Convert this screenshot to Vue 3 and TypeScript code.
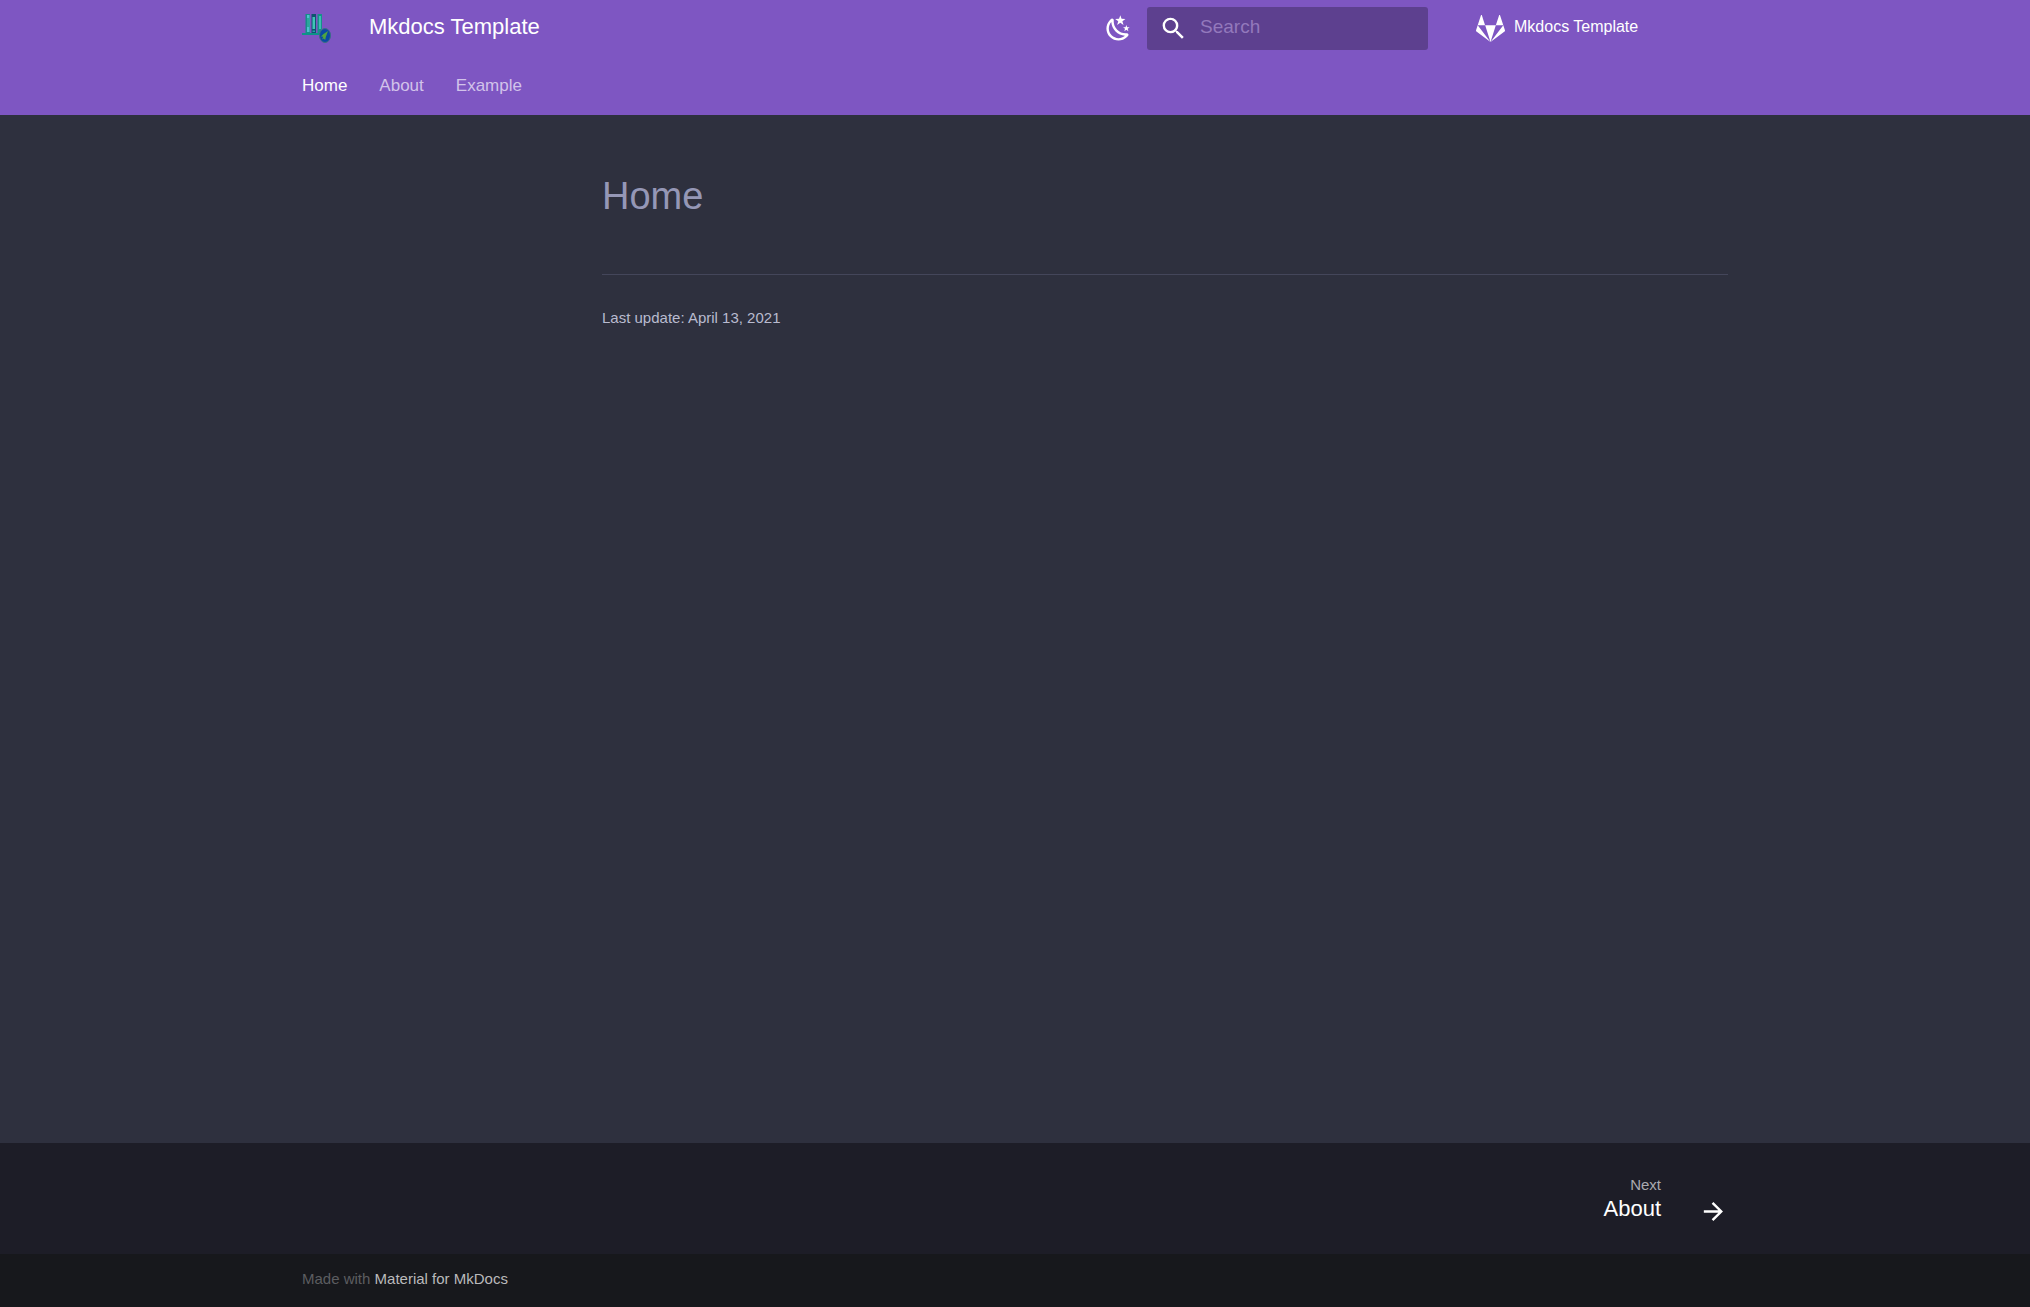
<script setup lang="ts">
import { ref } from 'vue'

interface Tab {
  label: string
  href: string
}

const tabs: Tab[] = [
  { label: 'Home', href: '#home' },
  { label: 'About', href: '#about' },
  { label: 'Example', href: '#example' },
]

const active = ref('Home')
const query = ref('')
</script>

<template>
  <div class="page">
    <header class="header">
      <div class="grid bar">
        <a class="logo" href="#home" aria-label="Mkdocs Template">
          <svg viewBox="0 0 29 29">
            <path d="M0 19h20v2H0z" fill="#0c9488" />
            <path d="M3.500 0H8v19H3.500z" fill="#158f88" />
            <path d="M5 1h2.500v17H5z" fill="#4fc0cf" />
            <path d="M5 4h2.500v9H5z" fill="#2aa79b" />
            <path d="M9.500 0H14v19H9.500z" fill="#0e5470" />
            <path d="M10.500 3h2.500v12h-2.500z" fill="#3fc4b6" />
            <path d="M10.500 16.500h2.500V18h-2.500z" fill="#2a9db0" />
            <path d="M15.500 0H20v15l-3 4h-1.500z" fill="#16918a" />
            <path d="M17 2h2v13h-2z" fill="#3dbdb2" />
            <ellipse cx="23" cy="21.500" rx="5.500" ry="7" fill="#0b49a5" stroke="#3b6f80" />
            <path d="M26 17l-4.500 3-2.500 2.500 2.300.3L20 25.500l1.700-1 1.500 1.500.6-3z" fill="#4fa53f" />
          </svg>
        </a>
        <span class="title">Mkdocs Template</span>
        <button class="palette" type="button" aria-label="Switch color scheme">
          <svg viewBox="0 0 24 24">
            <path d="M17.75 4.090l-2.530 1.940.910 3.060-2.630-1.810-2.630 1.810.910-3.060-2.530-1.940L12.440 4l1.060-3 1.060 3 3.190.090m3.500 6.910l-1.640 1.250.590 1.980-1.700-1.170-1.700 1.170.590-1.980L15.750 11l2.060-.050L18.500 9l.690 1.950 2.060.050m-2.280 4.950c.830-.080 1.720 1.100 1.190 1.850-.320.450-.660.870-1.080 1.270C15.170 23 8.840 23 4.940 19.070c-3.910-3.900-3.910-10.240 0-14.140.400-.400.820-.760 1.270-1.080.750-.530 1.930.360 1.850 1.190-.270 2.860.690 5.830 2.890 8.020a9.960 9.960 0 0 0 8.020 2.890m-1.640 2.020a12.080 12.080 0 0 1-7.800-3.470c-2.170-2.190-3.330-5-3.490-7.820-2.810 3.140-2.700 7.960.310 10.980 3.020 3.010 7.840 3.120 10.980.310z" />
          </svg>
        </button>
        <form class="search" role="search" @submit.prevent>
          <label for="search" aria-label="Search">
            <svg viewBox="0 0 24 24">
              <path d="M9.500 3A6.500 6.500 0 0 1 16 9.500c0 1.610-.590 3.090-1.560 4.230l.270.270h.790l5 5-1.500 1.500-5-5v-.790l-.270-.270A6.516 6.516 0 0 1 9.500 16 6.500 6.500 0 0 1 3 9.500 6.500 6.500 0 0 1 9.500 3m0 2C7 5 5 7 5 9.500S7 14 9.500 14 14 12 14 9.500 12 5 9.500 5z" />
            </svg>
          </label>
          <input id="search" v-model="query" type="text" placeholder="Search" autocomplete="off" />
        </form>
        <a class="source" href="#repository">
          <svg viewBox="0 0 512 512">
            <path d="M105.200 24.900c-3.100-8.900-15.700-8.900-18.900 0L29.800 199.700h132c-.100 0-56.600-174.800-56.600-174.800zM.900 287.700c-2.600 8 .300 16.900 7.100 22l247.900 184-226.200-294zm160.800-88l94.300 294 94.300-294zm349.400 88l-28.800-88-226.300 294 247.900-184c6.900-5.100 9.700-14 7.200-22zM425.700 24.900c-3.100-8.900-15.700-8.900-18.900 0l-56.600 174.800h132z" />
          </svg>
          <span>Mkdocs Template</span>
        </a>
      </div>
      <nav class="grid tabs" aria-label="Tabs">
        <a
          v-for="tab in tabs"
          :key="tab.label"
          :href="tab.href"
          :class="{ active: tab.label === active }"
          @click="active = tab.label"
        >{{ tab.label }}</a>
      </nav>
    </header>

    <main class="grid main">
      <article class="content">
        <h1>Home</h1>
        <hr />
        <p>Last update: April 13, 2021</p>
      </article>
    </main>

    <footer>
      <div class="footer-nav">
        <div class="grid">
          <a class="next" href="#about">
            <span class="next-text">
              <span class="direction">Next</span>
              <span class="target">About</span>
            </span>
            <svg viewBox="0 0 24 24">
              <path d="M4 11v2h12l-5.500 5.500 1.420 1.420L19.840 12l-7.920-7.920L10.500 5.500 16 11H4z" />
            </svg>
          </a>
        </div>
      </div>
      <div class="footer-meta">
        <div class="grid">
          Made with <a href="#material">Material for MkDocs</a>
        </div>
      </div>
    </footer>
  </div>
</template>

<style>
body {
  background: #2e303e;
}
</style>

<style scoped>
.page {
  display: flex;
  flex-direction: column;
  min-height: 100vh;
  background: #2e303e;
  color: #fff;
  font-family: "Liberation Sans", Arial, sans-serif;
}
* {
  box-sizing: border-box;
}
a {
  color: inherit;
  text-decoration: none;
}
svg {
  display: block;
  width: 29px;
  height: 29px;
  fill: currentColor;
}
.grid {
  width: 100%;
  max-width: 1464px;
  margin: 0 auto;
  padding: 0 19px;
}
.header {
  background: #7e56c2;
}
.bar {
  display: flex;
  align-items: center;
  height: 57px;
}
.logo {
  margin-right: 38px;
}
.title {
  flex: 1;
  font-size: 22px;
  line-height: 58px;
  padding-bottom: 4px;
}
.palette {
  padding: 0;
  border: 0;
  background: none;
  color: inherit;
  margin-right: 14px;
}
.search {
  display: flex;
  align-items: center;
  width: 281px;
  height: 43px;
  padding: 0 12px;
  border-radius: 3px;
  background: #5d408f;
}
.search input {
  flex: 1;
  min-width: 0;
  height: 43px;
  margin-left: 12px;
  padding: 0 0 3px;
  border: 0;
  outline: 0;
  background: none;
  color: #fff;
  font: 19px "Liberation Sans", Arial, sans-serif;
}
.search input::placeholder {
  color: #9379bc;
  opacity: 1;
}
.source {
  display: flex;
  align-items: center;
  width: 252px;
  margin-left: 48px;
  font-size: 16px;
}
.source span {
  margin-left: 9px;
  padding-bottom: 3px;
}
.tabs {
  display: flex;
  gap: 32px;
  height: 58px;
  font-size: 17px;
  line-height: 58px;
}
.tabs a {
  color: #d2c3ea;
}
.tabs a.active {
  color: #fff;
}
.main {
  flex: 1;
}
.content {
  margin-left: 300px;
  padding-top: 56px;
}
h1 {
  margin: 0 0 53px;
  color: #9597b6;
  font-size: 38px;
  font-weight: 400;
  line-height: 50px;
}
hr {
  height: 1px;
  margin: 0;
  border: 0;
  background: #44465a;
}
p {
  margin: 31px 0;
  color: #b9bbcf;
  font-size: 15px;
  line-height: 24px;
}
.footer-nav {
  background: #1d1d27;
}
.footer-nav .grid {
  display: flex;
  justify-content: flex-end;
  height: 111px;
}
.next {
  display: flex;
  align-items: flex-end;
  padding-bottom: 28px;
}
.next svg {
  margin-left: 38px;
}
.next-text {
  display: flex;
  flex-direction: column;
  align-items: flex-end;
  padding-bottom: 2px;
}
.direction {
  color: #aaaab0;
  font-size: 15px;
  line-height: 18px;
}
.target {
  font-size: 22px;
  line-height: 30px;
}
.footer-meta {
  height: 53px;
  background: #17181c;
  color: #5c5d60;
  font-size: 15px;
  line-height: 50px;
}
.footer-meta a {
  color: #bababb;
}
</style>
